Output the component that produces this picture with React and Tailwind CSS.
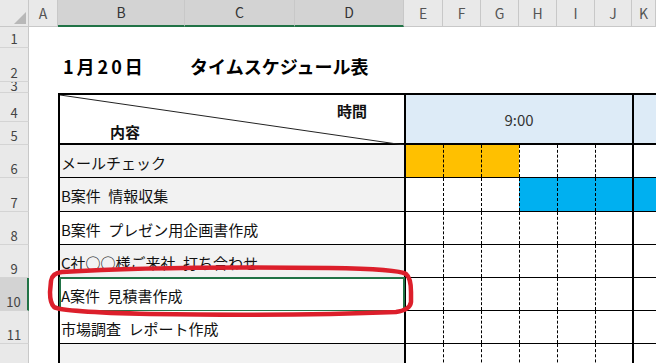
import React from 'react';

const font = { fontFamily: '"Noto Sans CJK JP", "Noto Sans", sans-serif' };

const cols = [
  { l: 'A', w: 'w-[29px]' },
  { l: 'B', w: 'w-[127px]', sel: true },
  { l: 'C', w: 'w-[110px]', sel: true },
  { l: 'D', w: 'w-[109px]', sel: true },
  { l: 'E', w: 'w-[39px]' },
  { l: 'F', w: 'w-[38px]' },
  { l: 'G', w: 'w-[38px]' },
  { l: 'H', w: 'w-[38px]' },
  { l: 'I', w: 'w-[38px]' },
  { l: 'J', w: 'w-[37px]' },
  { l: 'K', w: 'flex-1' },
];

const rowHeads = [
  { n: 1, h: 'h-[21px]' },
  { n: 2, h: 'h-[34px]' },
  { n: 3, h: 'h-[11px]', tight: true },
  { n: 4, h: 'h-[29px]' },
  { n: 5, h: 'h-[23px]' },
  { n: 6, h: 'h-[33px]' },
  { n: 7, h: 'h-[34px]' },
  { n: 8, h: 'h-[33px]' },
  { n: 9, h: 'h-[33px]' },
  { n: 10, h: 'h-[33px]', sel: true },
  { n: 11, h: 'h-[33px]' },
  { n: '', h: 'h-[40px]' },
];

const O = 'bg-[#ffc000]';
const S = 'bg-[#00b0f0]';

const tasks = [
  { text: 'メールチェック', h: 'h-[33px]', bg: 'bg-[#f2f2f2]', fill: [O, O, O, '', '', '', ''] },
  { text: 'B案件\u2002情報収集', h: 'h-[34px]', bg: 'bg-[#f2f2f2]', fill: ['', '', '', S, S, S, S] },
  { text: 'B案件\u2002プレゼン用企画書作成', h: 'h-[33px]', bg: 'bg-white', fill: [] },
  { text: 'C社○○様ご来社\u2002打ち合わせ', h: 'h-[33px]', bg: 'bg-[#f2f2f2]', fill: [] },
  { text: 'A案件\u2002見積書作成', h: 'h-[33px]', bg: 'bg-white', fill: [], active: true },
  { text: '市場調査\u2002レポート作成', h: 'h-[33px]', bg: 'bg-white', fill: [] },
  { text: '', h: 'h-[40px]', bg: 'bg-[#f2f2f2]', fill: [] },
];

const slotW = ['w-[39px] border-l-2', 'w-[38px] border-l border-dashed', 'w-[38px] border-l border-dashed', 'w-[38px] border-l border-dashed', 'w-[38px] border-l border-dashed', 'w-[37px] border-l border-dashed', 'flex-1 border-l-2'];

function TaskRow({ t }) {
  return (
    <div className={`flex ${t.h} border-b border-black`}>
      <div className={`relative w-[346px] border-l-2 border-black ${t.bg} flex items-center pl-[1px] pt-[4px] text-[15px] text-[#111] whitespace-nowrap`}>
        {t.text}
        {t.active && <div className="absolute -left-[1px] -top-[1px] -right-[1px] -bottom-[2px] border-2 border-[#217346]" />}
      </div>
      {slotW.map((w, i) => (
        <div key={i} className={`${w} border-black ${t.fill[i] || ''}`} />
      ))}
    </div>
  );
}

export default function App() {
  return (
    <div className="relative w-[656px] h-[363px] overflow-hidden bg-white" style={font}>
      {/* column headers */}
      <div className="flex h-[27px] bg-[#e9e9e9] text-[14px] text-[#555]">
        <div className="relative w-[29px] border-r border-b border-[#c8c8c8]">
          <svg className="absolute left-0 top-0" width="29" height="27">
            <polygon points="26,12 26,24 14,24" fill="#b8b8b8" />
          </svg>
        </div>
        {cols.map((c) => (
          <div
            key={c.l}
            className={`${c.w} flex items-end justify-center pb-[2px] border-r border-[#c8c8c8] ${
              c.sel ? 'bg-[#d3d3d3] border-b-2 border-b-[#217346] text-[#333]' : 'border-b'
            }`}
          >
            {c.l}
          </div>
        ))}
      </div>

      <div className="flex">
        {/* row headers */}
        <div className="w-[29px] flex flex-col text-[13px] text-[#444]">
          {rowHeads.map((r, i) => (
            <div
              key={i}
              className={`${r.h} overflow-hidden flex items-end justify-center ${r.tight ? 'pb-0' : 'pb-[2px]'} border-b border-[#d4d4d4] leading-none ${
                r.sel ? 'bg-[#d3d3d3] border-r-2 border-r-[#217346]' : 'bg-[#e9e9e9] border-r border-r-[#c8c8c8]'
              }`}
            >
              {r.n}
            </div>
          ))}
        </div>

        {/* sheet */}
        <div className="flex-1 flex flex-col">
          <div className="h-[21px]" />
          <div className="h-[34px] flex items-center pl-[34px] pt-[2px] text-[18px] font-bold text-black whitespace-nowrap">
            <span className="inline-block w-[127px] tracking-[3px]">1月20日</span>
            <span>タイムスケジュール表</span>
          </div>
          <div className="h-[11px]" />

          <div className="flex pl-[29px]">
            <div className="flex-1 flex flex-col">
              {/* header block */}
              <div className="flex h-[52px] border-t-2 border-b-2 border-black">
                <div className="relative w-[346px] border-l-2 border-black font-bold text-[15px] text-[#111]">
                  <svg className="absolute left-0 top-0" width="344" height="50">
                    <line x1="0" y1="0" x2="344" y2="50" stroke="#222" strokeWidth="1" />
                  </svg>
                  <span className="absolute left-[277px] top-[5px]">時間</span>
                  <span className="absolute left-[50px] top-[26px]">内容</span>
                </div>
                <div className="w-[228px] border-l-2 border-black bg-[#ddebf7] flex items-center justify-center pt-[3px] text-[15px] text-[#333]">
                  9:00
                </div>
                <div className="flex-1 border-l-2 border-black bg-[#ddebf7]" />
              </div>
              {tasks.map((t, i) => (
                <TaskRow key={i} t={t} />
              ))}
            </div>
          </div>
        </div>
      </div>

      {/* red annotation */}
      <svg className="absolute left-0 top-0 pointer-events-none" width="656" height="363">
        <path
          d="M 62 272 Q 160 266 330 268 Q 398 269 406 274 Q 411 278 411 292 L 411 302 Q 410 310 396 312 Q 300 316 150 314 Q 62 312 54 307 Q 50 303 50 292 L 51 281 Q 52 273 62 272 Z"
          fill="none"
          stroke="#dc1f2b"
          strokeWidth="4.5"
        />
      </svg>
    </div>
  );
}
